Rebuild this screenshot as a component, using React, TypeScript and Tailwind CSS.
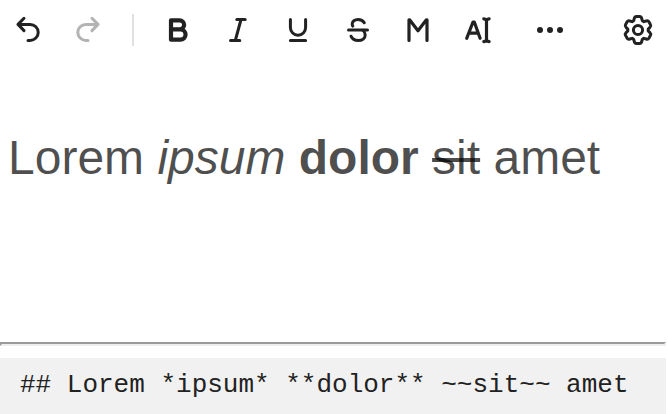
import type { ReactNode } from "react";

function Icon({ children, className = "", label }: { children: ReactNode; className?: string; label: string }) {
  return (
    <button aria-label={label} className={`h-10 w-10 shrink-0 ${className}`}>
      <svg
        viewBox="0 0 40 40"
        className="block h-10 w-10"
        fill="none"
        stroke="currentColor"
        strokeWidth="3"
        strokeLinecap="round"
        strokeLinejoin="round"
      >
        {children}
      </svg>
    </button>
  );
}

const arrow = "M16 8.3L10 14.4L16 20.6M10 14.4H22.2a8 8 0 0 1 0 16H20";

// One tooth of the gear, repeated every 60 degrees around the centre.
// The tooth's two outer corners are rounded with quadratic curves.
function gearPath() {
  let d = "";
  for (let i = 0; i < 6; i++) {
    const a = (i * Math.PI) / 3;
    const p = (x: number, y: number) =>
      `${(20 + x * Math.cos(a) - y * Math.sin(a)).toFixed(2)} ${(20 + x * Math.sin(a) + y * Math.cos(a)).toFixed(2)}`;
    d += `${i === 0 ? "M" : "L"}${p(-4.3, -9.3)}L${p(-3.7, -11.6)}Q${p(-3.2, -13.5)} ${p(-1.6, -13.5)}`;
    d += `L${p(1.6, -13.5)}Q${p(3.2, -13.5)} ${p(3.7, -11.6)}L${p(4.3, -9.3)}`;
  }
  return `${d}Z`;
}

export default function App() {
  return (
    <div className="flex h-[414px] w-[666px] flex-col bg-white font-['Liberation_Sans',Arial,sans-serif]">
      <div className="flex h-[60px] items-center pl-2 pr-2 text-[#222]">
        <Icon label="Undo">
          <path d={arrow} />
        </Icon>
        <Icon label="Redo" className="ml-5 text-[#b3b3b3]">
          <path d={arrow} transform="matrix(-1 0 0 1 40 0)" />
        </Icon>
        <div className="ml-6 mr-6 h-8 w-0.5 bg-[#e0e0e0]" />
        <div className="flex gap-5">
          <Icon label="Bold">
            <path
              strokeWidth="4.2"
              d="M13 10.3H21.6a4.5 4.5 0 0 1 0 9.1H13M22.4 19.4a5.1 5.1 0 0 1 0 10.3H13V10.3"
            />
          </Icon>
          <Icon label="Italic">
            <path d="M18.8 9.5H27.2M12.5 30.5H21.8M23 9.5L17.3 30.5" />
          </Icon>
          <Icon label="Underline">
            <path d="M12.4 9.5V17.6a7.6 7.6 0 0 0 15.2 0V9.5M12.4 30.5H27.6" />
          </Icon>
          <Icon label="Strikethrough">
            <path d="M10.5 20H29.5" />
            <path d="M26.3 12.8C25 10.5 22.8 9.4 20 9.4c-3.3 0-5.8 2-5.8 4.6 0 .8.2 1.5.6 2.1" />
            <path d="M13 26.2c1.2 2.8 3.8 4.3 7.2 4.3 4 0 7-2.2 7-5.6 0-1.8-.7-3.5-2.2-4.6" />
          </Icon>
          <Icon label="Mark">
            <path strokeWidth="3.2" d="M11 30.5V9.8h.6L20 20.7L28.4 9.8h.6V30.5" />
          </Icon>
          <Icon label="Text options">
            <path
              strokeWidth="3.2"
              d="M8.7 28.3L15 12h1.3L22.1 28.3M11.2 23.2H20.2M25.8 8.8c1.6.2 2.7.8 2.7 2V29.5c0 1.3-1.1 1.9-2.7 2.1M31.1 8.8c-1.6.2-2.6.8-2.6 2M31.1 31.6c-1.6-.2-2.6-.8-2.6-2.1"
            />
          </Icon>
        </div>
        <Icon label="More" className="ml-8">
          <g fill="currentColor" stroke="none">
            <circle cx="10" cy="20" r="3" />
            <circle cx="20" cy="20" r="3" />
            <circle cx="30" cy="20" r="3" />
          </g>
        </Icon>
        <Icon label="Settings" className="ml-12">
          <path d={gearPath()} />
          <circle cx="20" cy="20" r="4.6" />
        </Icon>
      </div>
      <div className="flex-1 whitespace-nowrap pl-2 pt-[70px] text-[48px] leading-[56px] text-black/70">
        <h2>
          Lorem <em>ipsum</em> <strong>dolor</strong> <s className="decoration-4">sit</s> amet
        </h2>
      </div>
      <div className="h-1 shrink-0 border-2 border-b-[#eee] border-l-[#9a9a9a] border-r-[#eee] border-t-[#9a9a9a]" />
      <pre className="mt-3 h-14 shrink-0 bg-[#f1f1f1] pl-5 pt-3 font-['Liberation_Mono',monospace] text-[26px] leading-[30px] text-[#222]">
        ## Lorem *ipsum* **dolor** ~~sit~~ amet
      </pre>
    </div>
  );
}
